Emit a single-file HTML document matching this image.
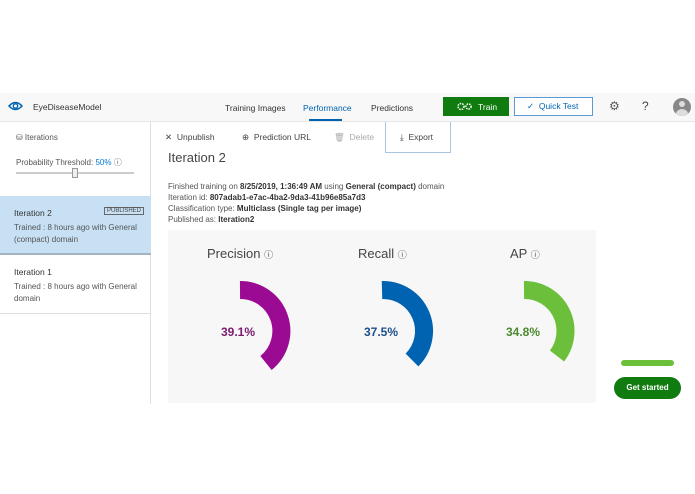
<!DOCTYPE html>
<html><head><meta charset="utf-8"><style>
*{margin:0;padding:0;box-sizing:border-box}
body{width:695px;height:494px;background:#fff;font-family:"Liberation Sans",sans-serif;position:relative;overflow:hidden;color:#333}
.a{position:absolute}
.t{font-size:8px;white-space:nowrap}
</style></head><body>
<div class="a" style="left:0;top:93px;width:695px;height:29px;background:#f8f8f8;border-bottom:1px solid #e6e6e6"></div>
<svg class="a" style="left:8px;top:100px" width="15" height="12" viewBox="0 0 15 12"><path d="M1 6 Q7.5 -1 14 6 Q7.5 13 1 6Z" fill="none" stroke="#0063b1" stroke-width="1.5"/><circle cx="7.5" cy="6" r="2.2" fill="none" stroke="#0063b1" stroke-width="1.4"/></svg>
<div class="a t" style="left:33px;top:102px;font-size:8.5px">EyeDiseaseModel</div>
<div class="a t" style="left:225px;top:103px;font-size:8.5px">Training Images</div>
<div class="a t" style="left:303px;top:103px;font-size:8.5px;color:#0063b1">Performance</div>
<div class="a" style="left:309px;top:119px;width:33px;height:2px;background:#0063b1"></div>
<div class="a t" style="left:371px;top:103px;font-size:8.5px">Predictions</div>
<div class="a" style="left:443px;top:97px;width:66px;height:19px;background:#107c10"></div>
<svg class="a" style="left:457px;top:102px" width="16" height="9" viewBox="0 0 16 9"><circle cx="4" cy="4.5" r="3" fill="none" stroke="#fff" stroke-width="1.5" stroke-dasharray="1.5 1"/><circle cx="11.5" cy="4.5" r="2.6" fill="none" stroke="#fff" stroke-width="1.5" stroke-dasharray="1.5 1"/></svg>
<div class="a t" style="left:478px;top:102px;color:#fff;font-size:8.5px">Train</div>
<div class="a" style="left:514px;top:97px;width:79px;height:19px;border:1px solid #5a9bd5;background:#fff;color:#0063b1;font-size:8.5px;line-height:17px;padding-left:12px">✓ &nbsp;Quick Test</div>
<div class="a t" style="left:609px;top:99px;font-size:12px;color:#555">⚙</div>
<div class="a t" style="left:642px;top:99px;font-size:12px;color:#444">?</div>
<div class="a" style="left:673px;top:98px;width:18px;height:18px;border-radius:50%;background:#888;overflow:hidden"><div class="a" style="left:6px;top:3px;width:6px;height:6px;border-radius:50%;background:#ddd"></div><div class="a" style="left:3px;top:11px;width:12px;height:10px;border-radius:50%;background:#ddd"></div></div>
<div class="a" style="left:0;top:122px;width:151px;height:282px;border-right:1px solid #e0e0e0"></div>
<div class="a t" style="left:16px;top:133px;color:#555">⛁ Iterations</div>
<div class="a t" style="left:16px;top:157px;color:#555">Probability Threshold: <span style="color:#0078d4">50%</span> ⓘ</div>
<div class="a" style="left:16px;top:172px;width:118px;height:2px;background:#ccc"></div>
<div class="a" style="left:72px;top:168px;width:6px;height:10px;border:1px solid #999;background:#eee"></div>
<div class="a" style="left:0;top:196px;width:151px;height:59px;background:#c7e0f4;border-bottom:2px solid #a0b4c4"></div>
<div class="a t" style="left:14px;top:208px;font-size:8.5px">Iteration 2</div>
<div class="a t" style="left:104px;top:207px;font-size:6px;border:1px solid #666;padding:0 2px;color:#444">PUBLISHED</div>
<div class="a t" style="left:14px;top:222px;color:#555;line-height:12px">Trained : 8 hours ago with General<br>(compact) domain</div>
<div class="a t" style="left:14px;top:267px;font-size:8.5px">Iteration 1</div>
<div class="a t" style="left:14px;top:281px;color:#555;line-height:12px">Trained : 8 hours ago with General<br>domain</div>
<div class="a" style="left:0;top:313px;width:151px;height:1px;background:#e0e0e0"></div>
<div class="a t" style="left:165px;top:132px;font-size:8.5px;color:#444">✕ &nbsp;Unpublish</div>
<div class="a t" style="left:242px;top:132px;font-size:8.5px;color:#444">⊕ &nbsp;Prediction URL</div>
<div class="a t" style="left:334px;top:132px;font-size:8.5px;color:#aaa">🗑 &nbsp;Delete</div>
<div class="a" style="left:385px;top:122px;width:66px;height:31px;border:1px solid #a8c4e0;border-top:none;background:#fff"></div>
<div class="a t" style="left:400px;top:132px;font-size:8.5px;color:#444">⤓ &nbsp;Export</div>
<div class="a t" style="left:168px;top:150px;font-size:13px;color:#444">Iteration 2</div>
<div class="a t" style="left:168px;top:181px;color:#555;line-height:11px">Finished training on <b style="color:#333">8/25/2019, 1:36:49 AM</b> using <b style="color:#333">General (compact)</b> domain<br>Iteration id: <b style="color:#333">807adab1-e7ac-4ba2-9da3-41b96e85a7d3</b><br>Classification type: <b style="color:#333">Multiclass (Single tag per image)</b><br>Published as: <b style="color:#333">Iteration2</b></div>
<div class="a" style="left:168px;top:230px;width:428px;height:173px;background:#f7f7f7"></div>
<div class="a t" style="left:207px;top:246px;font-size:13px;color:#444">Precision <span style="font-size:9px">ⓘ</span></div>
<div class="a t" style="left:358px;top:246px;font-size:13px;color:#444">Recall <span style="font-size:9px">ⓘ</span></div>
<div class="a t" style="left:510px;top:246px;font-size:13px;color:#444">AP <span style="font-size:9px">ⓘ</span></div>
<svg class="a" style="left:0;top:0" width="695" height="494">
<path d="M240 290 A41 41 0 0 1 266 363" fill="none" stroke="#9b0a93" stroke-width="18"/>
<path d="M382 290 A41 41 0 0 1 412 360" fill="none" stroke="#0063b1" stroke-width="18"/>
<path d="M524 290 A41 41 0 0 1 557 356" fill="none" stroke="#6bbf3b" stroke-width="18"/>
</svg>
<div class="a t" style="left:221px;top:325px;font-size:12px;color:#7a1a70;font-weight:bold">39.1%</div>
<div class="a t" style="left:364px;top:325px;font-size:12px;color:#1e4f8a;font-weight:bold">37.5%</div>
<div class="a t" style="left:506px;top:325px;font-size:12px;color:#4a8a30;font-weight:bold">34.8%</div>
<div class="a" style="left:621px;top:360px;width:53px;height:6px;border-radius:3px;background:#6bbf3b"></div>
<div class="a" style="left:614px;top:377px;width:67px;height:22px;border-radius:11px;background:#107c10;color:#fff;font-size:8px;font-weight:bold;text-align:center;line-height:22px">Get started</div>
</body></html>
